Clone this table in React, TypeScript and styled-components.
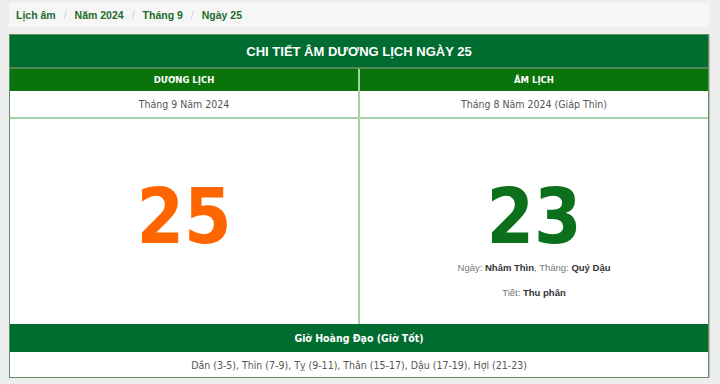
import * as React from 'react';
import styled, { createGlobalStyle } from 'styled-components';

const GlobalStyle = createGlobalStyle`
    html, body {
        margin: 0;
        padding: 0;
        background: #eeeeee;
    }
`;

const crumbs = ['Lịch âm', 'Năm 2024', 'Tháng 9', 'Ngày 25'];
const goodHours = 'Dần (3-5), Thìn (7-9), Tỵ (9-11), Thân (15-17), Dậu (17-19), Hợi (21-23)';

export default function App() {
    return (
        <Page>
            <GlobalStyle />
            <Breadcrumb>
                {crumbs.map((c, i) => (
                    <React.Fragment key={c}>
                        {i > 0 && <Slash>/</Slash>}
                        <Crumb>{c}</Crumb>
                    </React.Fragment>
                ))}
            </Breadcrumb>
            <Table>
                <Title>CHI TIẾT ÂM DƯƠNG LỊCH NGÀY 25</Title>
                <Columns>
                    <Column>
                        <ColHead>DƯƠNG LỊCH</ColHead>
                        <MonthRow>Tháng 9 Năm 2024</MonthRow>
                        <DayCell>
                            <BigDay color="#ff6600">25</BigDay>
                        </DayCell>
                    </Column>
                    <Column right>
                        <ColHead>ÂM LỊCH</ColHead>
                        <MonthRow>Tháng 8 Năm 2024 (Giáp Thìn)</MonthRow>
                        <DayCell>
                            <BigDay color="#0b6f1b">23</BigDay>
                            <InfoLine>
                                Ngày: <b>Nhâm Thìn</b>, Tháng: <b>Quý Dậu</b>
                            </InfoLine>
                            <InfoLine>
                                Tiết: <b>Thu phân</b>
                            </InfoLine>
                        </DayCell>
                    </Column>
                </Columns>
                <HoursHead>Giờ Hoàng Đạo (Giờ Tốt)</HoursHead>
                <HoursRow>{goodHours}</HoursRow>
            </Table>
        </Page>
    );
}

const Page = styled('div')`
    padding: 3px 11px 0 9px;
`;

const Breadcrumb = styled('div')`
    height: 24px;
    display: flex;
    align-items: center;
    padding-left: 7px;
    background: #f6f6f6;
    font-family: "Liberation Sans", Arial, sans-serif;
    font-size: 10.5px;
    font-weight: bold;
`;

const Crumb = styled('span')`
    color: #1d6b2c;
`;

const Slash = styled('span')`
    color: #cccccc;
    font-weight: normal;
    padding: 0 8px 0 8px;
`;

const Table = styled('div')`
    margin-top: 7px;
    border: 1px solid #5f905f;
    box-shadow: 1px 1px 1px rgba(0, 0, 0, 0.18);
    background: #ffffff;
`;

const Title = styled('div')`
    height: 32px;
    display: flex;
    align-items: center;
    justify-content: center;
    background: #016c30;
    border-bottom: 2px solid #4e8b55;
    color: #ffffff;
    font-family: "Liberation Sans", Arial, sans-serif;
    font-size: 13px;
    font-weight: bold;
`;

const Columns = styled('div')`
    display: grid;
    grid-template-columns: 348px 1fr;
`;

const Column = styled('div')<{ right?: boolean }>`
    display: flex;
    flex-direction: column;
    border-left: ${p => (p.right ? '2px solid #a4d2a4' : 'none')};
`;

const ColHead = styled('div')`
    height: 22px;
    display: flex;
    align-items: center;
    justify-content: center;
    background: #0a730a;
    color: #ffffff;
    font-family: "DejaVu Sans", Verdana, sans-serif;
    font-size: 8.5px;
    font-weight: bold;
`;

const MonthRow = styled('div')`
    height: 26px;
    display: flex;
    align-items: center;
    justify-content: center;
    border-bottom: 2px solid #a4d2a4;
    color: #555555;
    font-family: "DejaVu Sans Condensed", Tahoma, sans-serif;
    font-size: 10.5px;
`;

const DayCell = styled('div')`
    height: 205px;
    display: flex;
    flex-direction: column;
    align-items: center;
    padding-top: 60px;
    box-sizing: border-box;
`;

const BigDay = styled('div')<{ color: string }>`
    color: ${p => p.color};
    font-family: "DejaVu Sans Condensed", "DejaVu Sans", sans-serif;
    font-size: 76px;
    font-weight: bold;
    line-height: 76px;
`;

const InfoLine = styled('div')`
    color: #777777;
    font-family: "Liberation Sans", Arial, sans-serif;
    font-size: 9.5px;
    line-height: 25px;
    b {
        color: #333333;
    }
`;

const HoursHead = styled('div')`
    height: 28px;
    display: flex;
    align-items: center;
    justify-content: center;
    background: #016c30;
    color: #ffffff;
    font-family: "DejaVu Sans Condensed", Tahoma, sans-serif;
    font-size: 10.5px;
    font-weight: bold;
`;

const HoursRow = styled('div')`
    height: 25px;
    display: flex;
    align-items: center;
    justify-content: center;
    color: #555555;
    font-family: "DejaVu Sans Condensed", Tahoma, sans-serif;
    font-size: 10.5px;
`;
